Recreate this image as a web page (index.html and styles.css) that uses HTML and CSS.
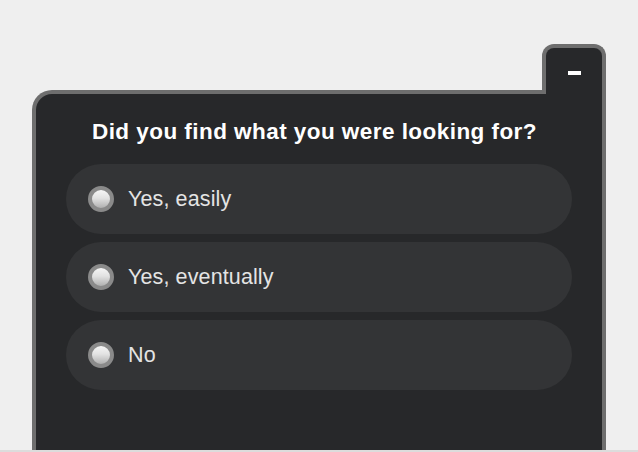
FILE: index.html
```html
<!DOCTYPE html>
<html lang="en">
<head>
<meta charset="utf-8">
<title>Feedback</title>
<link rel="stylesheet" href="styles.css">
</head>
<body>
<div class="widget">
  <div class="tab-row">
    <button class="tab" type="button" aria-label="Minimize"><span class="minus"></span></button>
  </div>
  <div class="panel">
    <h1 class="title">Did you find what you were looking for?</h1>
    <div class="options">
      <label class="option"><input class="radio" type="radio" name="found"><span class="label">Yes, easily</span></label>
      <label class="option"><input class="radio" type="radio" name="found"><span class="label">Yes, eventually</span></label>
      <label class="option"><input class="radio" type="radio" name="found"><span class="label">No</span></label>
    </div>
  </div>
</div>
<div class="bottom-strip"></div>
</body>
</html>
```

FILE: styles.css
```css
html, body {
  margin: 0;
  padding: 0;
}
body {
  background: #efefef;
  font-family: "Liberation Sans", Arial, Helvetica, sans-serif;
  height: 452px;
  overflow: hidden;
}
.widget {
  width: 574px;
  margin: 44px 0 0 32px;
}
.tab-row {
  display: flex;
  justify-content: flex-end;
}
.tab {
  box-sizing: border-box;
  width: 64px;
  height: 50px;
  margin: 0 0 -4px 0;
  padding: 23px 0 0 0;
  border: 4px solid #6e6e6e;
  border-bottom: none;
  border-radius: 12px 12px 0 0;
  background: #27282a;
  position: relative;
  z-index: 1;
  display: flex;
  justify-content: center;
  align-items: flex-start;
  cursor: pointer;
}
.minus {
  display: block;
  width: 13px;
  height: 4px;
  background: #ffffff;
}
.panel {
  box-sizing: border-box;
  height: 360px;
  border: 4px solid #6e6e6e;
  border-bottom: none;
  border-radius: 20px 0 0 0;
  background: #27282a;
  padding: 26px 30px 0 30px;
}
.title {
  margin: 0 0 20px 0;
  padding-right: 9px;
  font-size: 22.5px;
  line-height: 24px;
  font-weight: bold;
  letter-spacing: 0.45px;
  color: #ffffff;
  text-align: center;
  white-space: nowrap;
}
.options {
  display: flex;
  flex-direction: column;
  gap: 8px;
}
.option {
  display: flex;
  align-items: center;
  gap: 14px;
  height: 70px;
  padding-left: 22px;
  border-radius: 35px;
  background: #333436;
  cursor: pointer;
}
.radio {
  appearance: none;
  -webkit-appearance: none;
  box-sizing: border-box;
  margin: 0;
  width: 26px;
  height: 26px;
  border-radius: 50%;
  border: 4px solid #8a8a8a;
  background: linear-gradient(to bottom, #f6f6f6 0%, #e2e2e2 45%, #b0b0b0 100%);
  flex: none;
}
.label {
  font-size: 21.5px;
  letter-spacing: 0.12px;
  color: #e4e4e4;
}
.bottom-strip {
  position: fixed;
  left: 0;
  right: 0;
  bottom: 0;
  height: 2px;
  background: #dcdcdc;
}
```
